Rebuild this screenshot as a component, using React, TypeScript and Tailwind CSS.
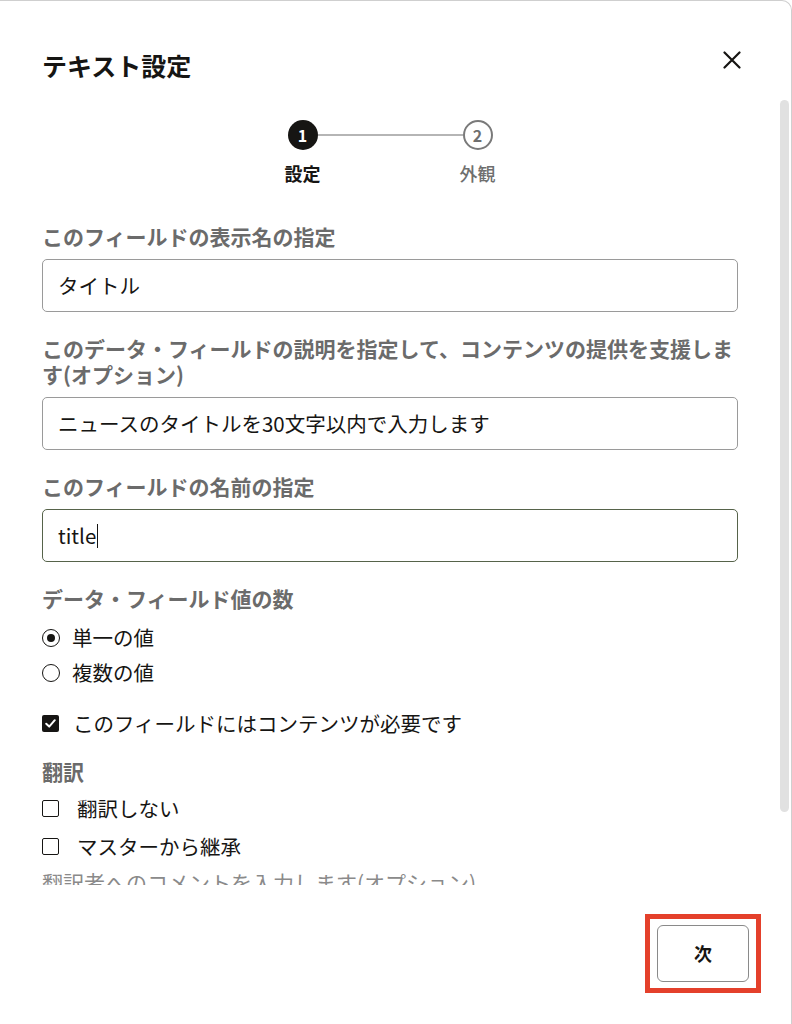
import React from "react";

const font = "font-['Noto_Sans_CJK_JP','Noto_Sans',sans-serif]";

const Label = ({ children }: { children: React.ReactNode }) => (
  <div className="text-[21px] leading-[26px] font-bold text-[#6b6b6b] mb-[10px]">{children}</div>
);

const Field = ({ children, focused }: { children: React.ReactNode; focused?: boolean }) => (
  <div
    className={
      focused
        ? "h-[53px] border border-[#56634a] rounded-[5px] px-[15px] flex items-center text-[20.5px] text-[#161513]"
        : "h-[53px] border border-[#9a9a9a] rounded-[5px] px-[15px] flex items-center text-[20.5px] text-[#161513]"
    }
  >
    {children}
  </div>
);

const Radio = ({ checked, label }: { checked?: boolean; label: string }) => (
  <div className="h-[35px] flex items-center gap-[12px] text-[20.5px] text-[#161513]">
    <span className="w-[18px] h-[18px] rounded-full border-[1.5px] border-[#161513] flex items-center justify-center">
      {checked && <span className="w-[8px] h-[8px] rounded-full bg-[#161513]" />}
    </span>
    <span>{label}</span>
  </div>
);

const Check = ({ checked }: { checked?: boolean }) =>
  checked ? (
    <span className="w-[17px] h-[17px] rounded-[2px] bg-[#161513] flex items-center justify-center">
      <svg width="13" height="13" viewBox="0 0 13 13" fill="none">
        <path d="M2.2 6.8 L5.2 9.6 L10.8 3.2" stroke="white" strokeWidth="2" strokeLinecap="round" strokeLinejoin="round" />
      </svg>
    </span>
  ) : (
    <span className="w-[17px] h-[17px] rounded-[2px] border-[1.5px] border-[#161513]" />
  );

export default function App() {
  return (
    <div className={`${font} w-[792px] h-[1024px] bg-white overflow-hidden border-t border-r border-[#cfcfcf] rounded-tr-[10px] flex flex-col`}>
      {/* header */}
      <div className="h-[99px] shrink-0 flex justify-between items-start pl-[42px] pr-[50px] pt-[48px]">
        <h1 className="text-[25px] leading-[32px] font-bold text-[#161513]">テキスト設定</h1>
        <button className="w-[18px] h-[18px] mt-[2px]">
          <svg width="18" height="18" viewBox="0 0 18 18" fill="none">
            <path d="M1.5 1.5 L16.5 16.5 M16.5 1.5 L1.5 16.5" stroke="#161513" strokeWidth="2.2" strokeLinecap="round" />
          </svg>
        </button>
      </div>

      {/* scroll area */}
      <div className="h-[785px] shrink-0 flex">
        <div className="w-[738px] pl-[42px] overflow-hidden pt-[20px]">
          {/* stepper */}
          <div className="flex justify-center">
            <div className="w-[30px] flex flex-col items-center">
              <div className="w-[30px] h-[30px] rounded-full bg-[#161513] text-white text-[16px] font-bold flex items-center justify-center">1</div>
              <div className="mt-[11px] text-[18px] leading-[24px] font-bold text-[#161513] whitespace-nowrap">設定</div>
            </div>
            <div className="w-[145px] h-[2px] bg-[#b5b5b5] mt-[14px]" />
            <div className="w-[30px] flex flex-col items-center">
              <div className="w-[30px] h-[30px] rounded-full border-2 border-[#7a7a7a] text-[#6f6f6f] text-[16px] font-bold flex items-center justify-center">2</div>
              <div className="mt-[11px] text-[18px] leading-[24px] font-medium text-[#6f6f6f] whitespace-nowrap">外観</div>
            </div>
          </div>

          <div className="mt-[38px]">
            <Label>このフィールドの表示名の指定</Label>
            <Field>タイトル</Field>
          </div>

          <div className="mt-[23px]">
            <Label>このデータ・フィールドの説明を指定して、コンテンツの提供を支援します(オプション)</Label>
            <Field>ニュースのタイトルを30文字以内で入力します</Field>
          </div>

          <div className="mt-[23px]">
            <Label>このフィールドの名前の指定</Label>
            <Field focused>
              <span>title</span>
              <span className="inline-block w-px h-[24px] bg-[#161513] ml-px" />
            </Field>
          </div>

          <div className="mt-[23px] text-[21px] leading-[26px] font-bold text-[#6b6b6b] mb-[9px]">データ・フィールド値の数</div>
          <Radio checked label="単一の値" />
          <Radio label="複数の値" />

          <div className="mt-[16px] h-[35px] flex items-center gap-[14px] text-[20.5px] text-[#161513]">
            <Check checked />
            <span>このフィールドにはコンテンツが必要です</span>
          </div>

          <div className="mt-[17px] text-[21px] leading-[26px] font-bold text-[#6b6b6b]">翻訳</div>
          <div className="mt-[5px] h-[38px] flex items-center gap-[18px] text-[20.5px] text-[#161513]">
            <Check />
            <span>翻訳しない</span>
          </div>
          <div className="h-[38px] flex items-center gap-[18px] text-[20.5px] text-[#161513]">
            <Check />
            <span>マスターから継承</span>
          </div>
          <div className="mt-[4px] text-[21px] leading-[26px] text-[#8a8a8a]">翻訳者へのコメントを入力します(オプション)</div>
        </div>

        {/* scrollbar */}
        <div className="ml-[42px] w-[9px]">
          <div className="h-[712px] rounded-full bg-[#e1e1e1]" />
        </div>
      </div>

      {/* footer */}
      <div className="flex-1 flex justify-end items-start pt-[29px] pr-[30px]">
        <div className="border-[5px] border-[#e4402b] px-[7px] py-[6px]">
          <button className="w-[92px] h-[57px] border border-[#8a8a8a] rounded-[6px] text-[18px] font-bold text-[#161513] flex items-center justify-center">
            次
          </button>
        </div>
      </div>
    </div>
  );
}
